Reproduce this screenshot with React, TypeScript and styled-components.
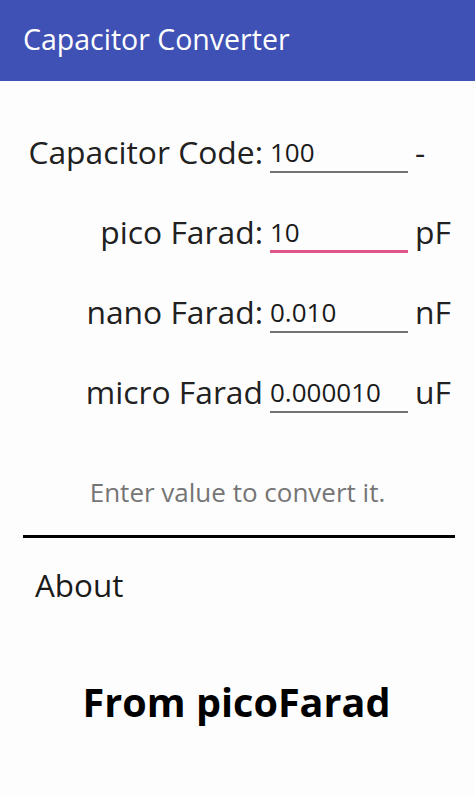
import React, { FC, useState } from "react";
import styled, { createGlobalStyle } from "styled-components";

const GlobalStyle = createGlobalStyle`
  body {
    margin: 0;
    background: #fefdfe;
    font-family: "Open Sans", "Noto Sans", sans-serif;
  }
`;

const units = [
  { id: "code", label: "Capacitor Code:", value: "100", unit: "-" },
  { id: "pf", label: "pico Farad:", value: "10", unit: "pF" },
  { id: "nf", label: "nano Farad:", value: "0.010", unit: "nF" },
  { id: "uf", label: "micro Farad", value: "0.000010", unit: "uF" },
];

const Screen = styled.div`
  width: 475px;
  height: 796px;
  display: flex;
  flex-direction: column;
  overflow: hidden;
`;

const AppBar = styled.header`
  height: 81px;
  background: #3f51b5;
  display: flex;
  align-items: center;
  padding: 0 0 4px 23px;
  box-sizing: border-box;
`;

const Title = styled.h1`
  margin: 0;
  color: #fff;
  font-size: 28.5px;
  font-weight: 400;
`;

const Form = styled.div`
  padding-top: 30px;
  display: flex;
  flex-direction: column;
`;

const Row = styled.div`
  height: 80px;
  display: grid;
  grid-template-columns: 263px 138px auto;
  column-gap: 7px;
  align-items: center;
`;

const Label = styled.label`
  text-align: right;
  font-size: 31.8px;
  color: #212121;
  white-space: nowrap;
`;

const Field = styled.input<{ $focused?: boolean }>`
  width: 100%;
  height: 44px;
  box-sizing: border-box;
  border: 0;
  border-bottom: ${(p) => (p.$focused ? "3px solid #e0558a" : "2px solid #737373")};
  padding: ${(p) => (p.$focused ? "4px 0 0 0" : "3px 0 0 0")};
  background: transparent;
  font-family: inherit;
  font-size: 26px;
  color: #1a1a1a;
  outline: none;
`;

const Unit = styled.span`
  font-size: 31.8px;
  color: #212121;
`;

const Hint = styled.p`
  margin: 46px 0 0;
  line-height: 30px;
  text-align: center;
  font-size: 26px;
  color: #757575;
`;

const Divider = styled.hr`
  margin: 28px 20px 0 23px;
  border: 0;
  height: 3px;
  background: #000;
`;

const AboutLink = styled.div`
  margin: 27px 0 0 35px;
  line-height: 40px;
  font-size: 31.4px;
  color: #1a1a1a;
`;

const Heading = styled.h2`
  margin: 72px 0 0;
  line-height: 50px;
  text-align: center;
  font-size: 39.6px;
  font-weight: 700;
  color: #000;
  padding-right: 2px;
`;

const App: FC = () => {
  const [values, setValues] = useState<Record<string, string>>(
    Object.fromEntries(units.map((u) => [u.id, u.value]))
  );

  const handleChange = (event: React.ChangeEvent<HTMLInputElement>) => {
    const { id, value } = event.target;
    setValues((prev) => ({ ...prev, [id]: value }));
  };

  return (
    <Screen>
      <GlobalStyle />
      <AppBar>
        <Title>Capacitor Converter</Title>
      </AppBar>
      <Form>
        {units.map((u) => (
          <Row key={u.id}>
            <Label htmlFor={u.id}>{u.label}</Label>
            <Field
              id={u.id}
              type="text"
              value={values[u.id]}
              onChange={handleChange}
              $focused={u.id === "pf"}
            />
            <Unit>{u.unit}</Unit>
          </Row>
        ))}
      </Form>
      <Hint>Enter value to convert it.</Hint>
      <Divider />
      <AboutLink>About</AboutLink>
      <Heading>From picoFarad</Heading>
    </Screen>
  );
};

export default App;
